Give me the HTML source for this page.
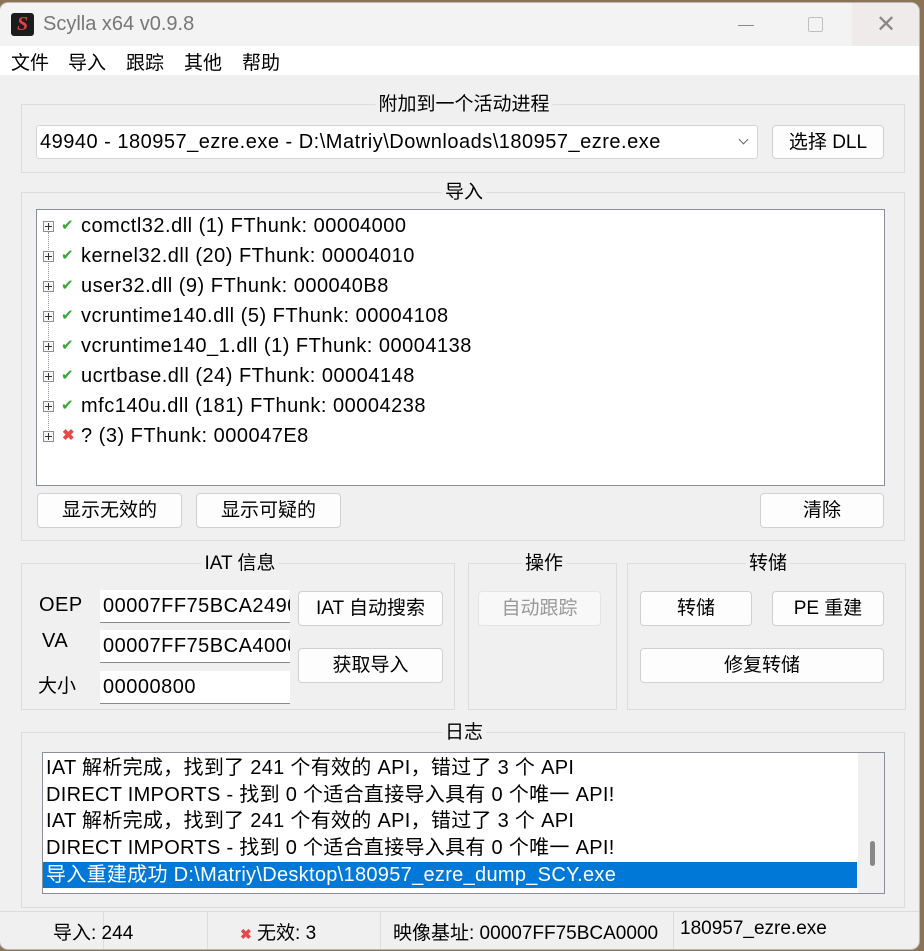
<!DOCTYPE html>
<html><head><meta charset="utf-8">
<style>
*{margin:0;padding:0;box-sizing:border-box}
body{width:924px;height:951px;overflow:hidden;background:#8a7453;font-family:"Liberation Sans","Noto Sans CJK SC",sans-serif;font-size:19px;color:#000;position:relative}
.win{position:absolute;left:0;top:3px;width:919px;height:946px;background:#f0f0f0;border-radius:8px;overflow:hidden;box-shadow:0 0 0 1px #b8b8b8}
.a{position:absolute}
.L{font-size:20px;letter-spacing:0.5px}
.title{left:0;top:0;width:100%;height:43px;background:#f3f3f3}
.menu{left:0;top:43px;width:100%;height:29px;background:#fff}
.grp{position:absolute;border:1px solid #dcdcdc}
.gt{position:absolute;background:#f0f0f0;padding:0 3px;transform:translateX(-50%);top:-12px;white-space:nowrap;line-height:24px}
.btn{position:absolute;background:#fdfdfd;border:1px solid #d0d0d0;border-radius:4px;text-align:center;line-height:34px;white-space:nowrap}
.edit{position:absolute;background:#fff;border-bottom:1px solid #8a8a8a;height:33px;line-height:33px;padding-left:3px;overflow:hidden;white-space:nowrap;font-size:20px;letter-spacing:0.5px}
.row{position:absolute;left:0;height:30px;line-height:30px;white-space:nowrap}
.exp{position:absolute;left:6px;top:10px;width:11px;height:11px;border:1px solid #8f8f8f;background:#f6f6f6}
.exp:before{content:"";position:absolute;left:1px;top:4px;width:7px;height:1px;background:#333}
.exp:after{content:"";position:absolute;left:4px;top:1px;width:1px;height:7px;background:#333}
.ck{position:absolute;left:24px;top:0;color:#3aa53a;font-size:15px}
.x{position:absolute;left:25px;top:0;color:#e84848;font-size:15px;font-weight:bold}
.tx{position:absolute;left:44px;top:0;font-size:20px;letter-spacing:0.5px}
.log div{height:26.7px;line-height:26.7px;padding-left:3px;white-space:nowrap;font-size:20px;letter-spacing:0.3px}
.sep{position:absolute;top:909px;width:1px;height:37px;background:#dcdcdc}
</style></head><body>
<div class="win">
<div class="a title">
  <div class="a" style="left:11px;top:10px;width:23px;height:23px;background:#1c1c1c;border-radius:3px;color:#d84545;font:bold italic 20px 'Liberation Serif',serif;text-align:center;line-height:23px">S</div>
  <div class="a" style="left:43px;top:10px;color:#777;font-size:20px">Scylla x64 v0.9.8</div>
  <div class="a" style="left:738px;top:22px;width:16px;height:1px;background:#888"></div>
  <div class="a" style="left:808px;top:14px;width:15px;height:15px;border:1px solid #c0c0c0;border-radius:2px"></div>
  <div class="a" style="left:852px;top:0;width:67px;height:43px;background:#efebea"></div>
  <div class="a" style="left:876px;top:7px;color:#888;font-size:24px;font-weight:300">✕</div>
</div>
<div class="a menu">
  <span class="a" style="left:11px;top:2px">文件</span>
  <span class="a" style="left:68px;top:2px">导入</span>
  <span class="a" style="left:126px;top:2px">跟踪</span>
  <span class="a" style="left:184px;top:2px">其他</span>
  <span class="a" style="left:242px;top:2px">帮助</span>
</div>

<div class="grp" style="left:21px;top:101px;width:884px;height:69px"><div class="gt" style="left:442px">附加到一个活动进程</div></div>
<div class="a L" style="left:36px;top:122px;width:722px;height:34px;background:#fff;border:1px solid #d4d4d4;border-radius:3px;line-height:32px;padding-left:3px;white-space:nowrap">49940 - 180957_ezre.exe - D:\Matriy\Downloads\180957_ezre.exe</div>
<div class="a" style="left:740px;top:133px;width:7px;height:7px;border-right:1px solid #666;border-bottom:1px solid #666;transform:rotate(45deg)"></div>
<div class="btn" style="left:772px;top:122px;width:112px;height:34px;line-height:33px">选择 DLL</div>

<div class="grp" style="left:21px;top:189px;width:884px;height:349px"><div class="gt" style="left:442px">导入</div></div>
<div class="a" style="left:36px;top:206px;width:849px;height:277px;background:#fff;border:1px solid #8a8f99">
  <div class="a" style="left:11px;top:22px;width:0;height:210px;border-left:1px dotted #999"></div>
  <div class="row" style="top:1px"><span class="exp"></span><span class="ck">✔</span><span class="tx">comctl32.dll (1) FThunk: 00004000</span></div>
  <div class="row" style="top:31px"><span class="exp"></span><span class="ck">✔</span><span class="tx">kernel32.dll (20) FThunk: 00004010</span></div>
  <div class="row" style="top:61px"><span class="exp"></span><span class="ck">✔</span><span class="tx">user32.dll (9) FThunk: 000040B8</span></div>
  <div class="row" style="top:91px"><span class="exp"></span><span class="ck">✔</span><span class="tx">vcruntime140.dll (5) FThunk: 00004108</span></div>
  <div class="row" style="top:121px"><span class="exp"></span><span class="ck">✔</span><span class="tx">vcruntime140_1.dll (1) FThunk: 00004138</span></div>
  <div class="row" style="top:151px"><span class="exp"></span><span class="ck">✔</span><span class="tx">ucrtbase.dll (24) FThunk: 00004148</span></div>
  <div class="row" style="top:181px"><span class="exp"></span><span class="ck">✔</span><span class="tx">mfc140u.dll (181) FThunk: 00004238</span></div>
  <div class="row" style="top:211px"><span class="exp"></span><span class="x">✖</span><span class="tx">? (3) FThunk: 000047E8</span></div>
</div>
<div class="btn" style="left:37px;top:490px;width:145px;height:35px">显示无效的</div>
<div class="btn" style="left:196px;top:490px;width:145px;height:35px">显示可疑的</div>
<div class="btn" style="left:760px;top:490px;width:124px;height:35px">清除</div>

<div class="grp" style="left:21px;top:560px;width:434px;height:147px"><div class="gt" style="left:218px">IAT 信息</div></div>
<span class="a L" style="left:39px;top:591px">OEP</span>
<span class="a L" style="left:42px;top:627px">VA</span>
<span class="a" style="left:38px;top:668px">大小</span>
<div class="edit" style="left:100px;top:587px;width:190px">00007FF75BCA2490</div>
<div class="edit" style="left:100px;top:627px;width:190px">00007FF75BCA4000</div>
<div class="edit" style="left:100px;top:668px;width:190px">00000800</div>
<div class="btn" style="left:298px;top:588px;width:145px;height:35px">IAT 自动搜索</div>
<div class="btn" style="left:298px;top:645px;width:145px;height:35px">获取导入</div>

<div class="grp" style="left:468px;top:560px;width:149px;height:147px"><div class="gt" style="left:75px">操作</div></div>
<div class="btn" style="left:478px;top:588px;width:123px;height:35px;color:#999;background:#f8f8f8;border-color:#e4e4e4">自动跟踪</div>

<div class="grp" style="left:627px;top:560px;width:279px;height:147px"><div class="gt" style="left:140px">转储</div></div>
<div class="btn" style="left:640px;top:588px;width:112px;height:35px">转储</div>
<div class="btn" style="left:772px;top:588px;width:112px;height:35px">PE 重建</div>
<div class="btn" style="left:640px;top:645px;width:244px;height:35px">修复转储</div>

<div class="grp" style="left:21px;top:729px;width:884px;height:176px"><div class="gt" style="left:442px">日志</div></div>
<div class="a log" style="left:42px;top:749px;width:843px;height:142px;background:#fff;border:1px solid #8a8f99;padding-top:2px;overflow:hidden">
  <div>IAT 解析完成，找到了 241 个有效的 API，错过了 3 个 API</div>
  <div>DIRECT IMPORTS - 找到 0 个适合直接导入具有 0 个唯一 API!</div>
  <div>IAT 解析完成，找到了 241 个有效的 API，错过了 3 个 API</div>
  <div>DIRECT IMPORTS - 找到 0 个适合直接导入具有 0 个唯一 API!</div>
  <div style="background:#0078d7;color:#fff;width:814px">导入重建成功 D:\Matriy\Desktop\180957_ezre_dump_SCY.exe</div>
  <div class="a" style="right:0;top:0;width:26px;height:140px;background:#f0f0f0"></div>
  <div class="a" style="right:9px;top:88px;width:5px;height:25px;background:#888;border-radius:3px"></div>
</div>

<div class="a" style="left:0;top:908px;width:100%;height:1px;background:#dcdcdc"></div>
<div class="sep" style="left:103px"></div>
<div class="sep" style="left:207px"></div>
<div class="sep" style="left:380px"></div>
<div class="sep" style="left:673px"></div>
<span class="a" style="left:53px;top:915px">导入: 244</span>
<span class="a" style="left:240px;top:915px"><span style="color:#e84848;font-size:14px;font-weight:bold">✖</span> 无效: 3</span>
<span class="a" style="left:393px;top:915px">映像基址: 00007FF75BCA0000</span>
<span class="a" style="left:680px;top:915px">180957_ezre.exe</span>
</div>
</body></html>
